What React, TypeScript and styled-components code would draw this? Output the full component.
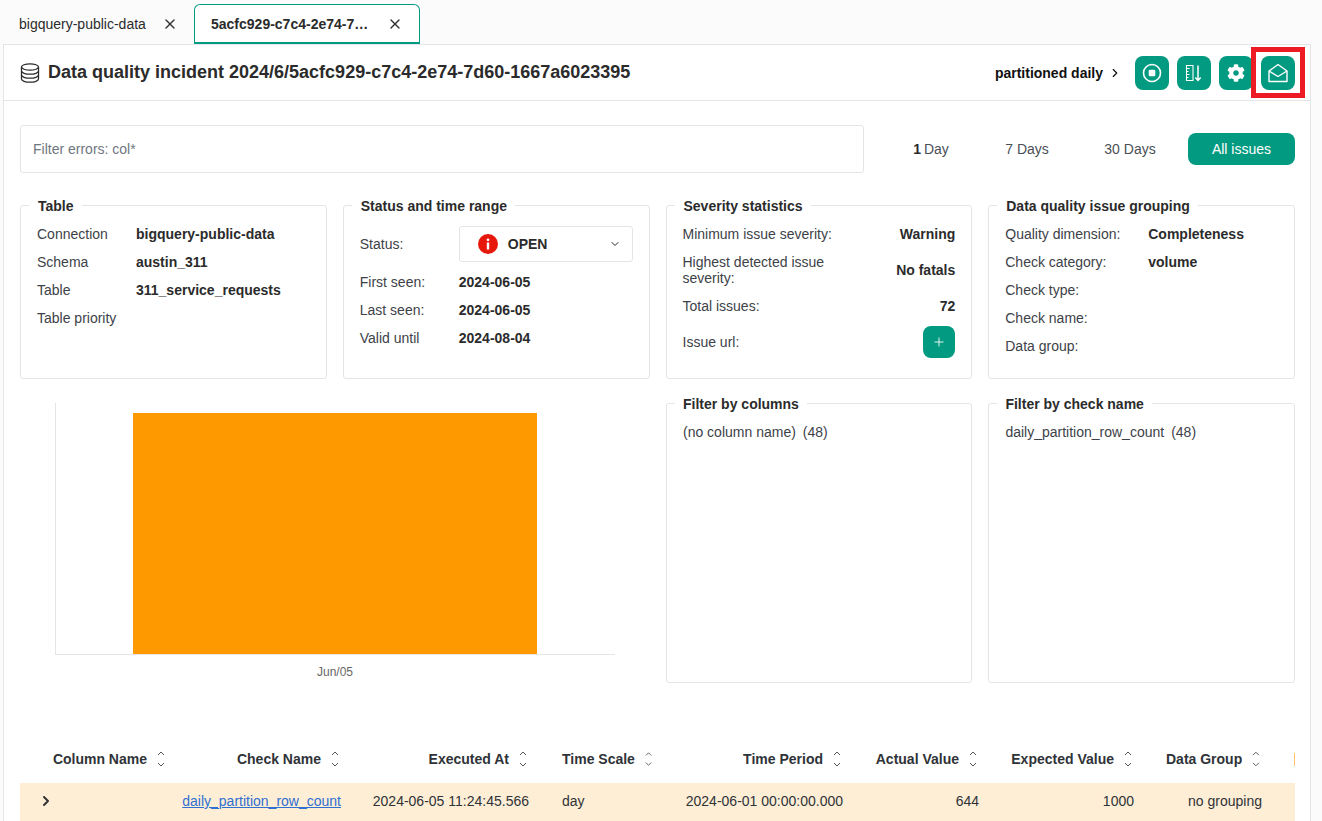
import React from 'react';
import styled, { createGlobalStyle } from 'styled-components';
import { X, ChevronRight, ChevronDown, Plus } from 'lucide-react';
import { FaCog } from 'react-icons/fa';

const GlobalStyle = createGlobalStyle`
	html, body {
		margin: 0;
		padding: 0;
		height: 821px;
		overflow: hidden;
		background: #fbfbfb;
		font-family: 'Liberation Sans', Arial, sans-serif;
		font-size: 14px;
		color: #2b2b2b;
	}
	* {
		box-sizing: border-box;
	}
`;

const Page = styled.div`
	position: relative;
	width: 1322px;
	height: 821px;
	overflow: hidden;
	padding-left: 3px;
`;

const TabBar = styled.div`
	display: flex;
	align-items: flex-end;
	height: 44px;
	padding-left: 1px;
`;

const Tab = styled.div<{ $active?: boolean }>`
	display: flex;
	align-items: center;
	justify-content: space-between;
	height: 40px;
	width: ${(props) => (props.$active ? '226px' : '190px')};
	padding: ${(props) => (props.$active ? '0 16px 0 16px' : '0 16px 0 15px')};
	font-size: 14px;
	font-weight: ${(props) => (props.$active ? 700 : 400)};
	background: ${(props) => (props.$active ? '#fff' : 'transparent')};
	border: ${(props) => (props.$active ? '1px solid #029a80' : 'none')};
	border-bottom-width: ${(props) => (props.$active ? '2px' : '0')};
	border-radius: 6px 6px 0 0;

	svg {
		flex: none;
	}
`;

const Panel = styled.div`
	width: 1308px;
	height: 777px;
	background: #fff;
	border: 1px solid #e3e5e8;
	border-bottom: none;
`;

const Header = styled.div`
	display: flex;
	align-items: center;
	justify-content: space-between;
	height: 56px;
	padding: 0 15px 0 16px;
	border-bottom: 1px solid #e3e5e8;
`;

const Title = styled.h1`
	display: flex;
	align-items: center;
	gap: 8px;
	margin: 0;
	font-size: 18px;
	font-weight: 700;
`;

const HeaderRight = styled.div`
	display: flex;
	align-items: center;
	gap: 8px;
`;

const Partition = styled.div`
	display: flex;
	align-items: center;
	gap: 5px;
	margin-right: 5px;
	font-size: 14px;
	font-weight: 700;
	color: #111;
`;

const IconButton = styled.button`
	display: flex;
	align-items: center;
	justify-content: center;
	width: 34px;
	height: 34px;
	padding: 0;
	border: none;
	border-radius: 8px;
	background: #029a80;
	color: #fff;
`;

const Body = styled.div`
	padding: 24px 15px 0 16px;
`;

const FilterRow = styled.div`
	display: flex;
	align-items: center;
	justify-content: space-between;
	height: 48px;
`;

const FilterInput = styled.div`
	display: flex;
	align-items: center;
	width: 844px;
	height: 48px;
	padding-left: 12px;
	border: 1px solid #e3e5e8;
	border-radius: 3px;
	font-size: 14px;
	color: #6f7780;
`;

const RangeGroup = styled.div`
	display: flex;
	align-items: center;
`;

const RangeButton = styled.div<{ $active?: boolean; $w: number }>`
	display: flex;
	align-items: center;
	justify-content: center;
	height: 32px;
	width: ${(props) => props.$w}px;
	border-radius: 8px;
	font-size: 14px;
	color: ${(props) => (props.$active ? '#fff' : '#4a4f55')};
	background: ${(props) => (props.$active ? '#029a80' : 'transparent')};

	b {
		font-weight: 700;
		color: #2b2b2b;
		margin-right: 3px;
	}
`;

const CardGrid = styled.div`
	display: grid;
	grid-template-columns: repeat(4, 1fr);
	column-gap: 16px;
	margin-top: 24px;
`;

const Card = styled.fieldset`
	min-width: 0;
	height: 182px;
	margin: 0;
	padding: 0 16px;
	border: 1px solid #e3e5e8;
	border-radius: 3px;
`;

const Legend = styled.legend`
	margin-left: -8px;
	padding: 1px 8px 0 9px;
	font-size: 14px;
	font-weight: 700;
	line-height: 16px;
`;

const FilterLegend = styled(Legend)`
	padding-left: 8px;
`;

const Rows = styled.div`
	display: flex;
	flex-direction: column;
	margin-top: 6px;
`;

const Row = styled.div<{ $h?: number; $between?: boolean }>`
	display: flex;
	align-items: center;
	justify-content: ${(props) => (props.$between ? 'space-between' : 'flex-start')};
	min-height: ${(props) => props.$h ?? 28}px;
	font-size: 14px;
	line-height: 16px;
`;

const RowLabel = styled.div<{ $w?: number }>`
	flex: none;
	width: ${(props) => props.$w ?? 99}px;
	color: #3d4248;
`;

const RowValue = styled.div`
	font-weight: 700;
	color: #2b2b2b;
`;

const StatusSelect = styled.div`
	display: flex;
	align-items: center;
	width: 174px;
	height: 36px;
	padding: 0 11px 0 18px;
	border: 1px solid #e3e5e8;
	border-radius: 3px;
	font-weight: 700;

	span {
		flex: 1;
		margin-left: 10px;
	}
`;

const PlusButton = styled.button`
	display: flex;
	align-items: center;
	justify-content: center;
	width: 32px;
	height: 32px;
	padding: 0;
	border: none;
	border-radius: 8px;
	background: #029a80;
	color: #fff;
`;

const MiddleGrid = styled.div`
	display: grid;
	grid-template-columns: 630px 306.4px 1fr;
	column-gap: 16px;
	margin-top: 16px;
`;

const ChartBox = styled.div`
	display: flex;
	flex-direction: column;
	height: 280px;
	margin-top: 8px;
	padding-left: 35px;
`;

const Plot = styled.div`
	display: flex;
	align-items: flex-end;
	width: 560px;
	height: 252px;
	padding-left: 77px;
	border-left: 1px solid #e3e5e8;
	border-bottom: 1px solid #e3e5e8;
`;

const Bar = styled.div`
	width: 404px;
	height: 241px;
	background: #ff9900;
`;

const AxisLabel = styled.div`
	width: 560px;
	margin-top: 10px;
	text-align: center;
	font-size: 12px;
	color: #666;
`;

const FilterCard = styled(Card)`
	height: 288px;
`;

const FilterItem = styled.div`
	display: flex;
	gap: 7px;
	margin-top: 12px;
	font-size: 14px;
	line-height: 16px;
	color: #3d4248;
`;

const Table = styled.div`
	margin-top: 60px;
	overflow: hidden;
	width: 1275px;
`;

const TableRow = styled.div<{ $head?: boolean }>`
	display: grid;
	grid-template-columns: 163px 174px 188px 125px 189px 136px 155px 128px 200px;
	align-items: center;
	height: 40px;
	padding-bottom: ${(props) => (props.$head ? '8px' : '4px')};
	background: ${(props) => (props.$head ? 'transparent' : '#feeed6')};
	font-weight: ${(props) => (props.$head ? 700 : 400)};
`;

const Cell = styled.div<{ $align?: string; $pl?: number }>`
	display: flex;
	align-items: center;
	justify-content: ${(props) => props.$align ?? 'flex-end'};
	padding: 0 16px 0 ${(props) => props.$pl ?? 16}px;
	white-space: nowrap;
	color: #2f3338;
	font-size: 14px;
`;

const HeadCell = styled(Cell)`
	padding-right: 18px;
`;

const HeadLabel = styled.span`
	margin-right: 10px;
`;

const CheckLink = styled.a`
	color: #2f6fd0;
	text-decoration: underline;
`;

const Marker = styled.span`
	width: 1px;
	height: 13px;
	background: #ffc266;
`;

const Annotation = styled.div`
	position: absolute;
	left: 1251px;
	top: 47px;
	width: 54px;
	height: 51px;
	border: 5px solid #ed1c24;
`;

const DatabaseIcon = () => (
	<svg width="20" height="20" viewBox="0 0 20 20" fill="none" stroke="#2b2b2b" strokeWidth="1.3">
		<ellipse cx="10" cy="4" rx="8.5" ry="3.2" />
		<path d="M1.500 4v12c0 1.800 3.800 3.200 8.500 3.200s8.500-1.400 8.500-3.200V4" />
		<path d="M1.500 8c0 1.800 3.800 3.200 8.500 3.200s8.500-1.400 8.500-3.200" />
		<path d="M1.500 12c0 1.800 3.800 3.200 8.500 3.200s8.500-1.400 8.500-3.200" />
	</svg>
);

const StopIcon = () => (
	<svg width="20" height="20" viewBox="0 0 20 20" fill="none">
		<circle cx="10" cy="10" r="8.500" stroke="#fff" strokeWidth="1.600" />
		<rect x="6.700" y="6.700" width="6.600" height="6.600" rx="1.200" fill="#fff" />
	</svg>
);

const SortColumnIcon = () => (
	<svg width="18" height="18" viewBox="0 0 18 18" fill="none" stroke="#fff" strokeWidth="1.100">
		<path d="M1.500 1.500h6.500v15H1.500z" />
		<path d="M1.500 4.500h3M1.500 7.500h2M1.500 10.500h3M1.500 13.500h2" />
		<path d="M13 1.500v14.500M10.300 13.500l2.700 3 2.700-3" strokeWidth="1.500" />
	</svg>
);

const OpenMailIcon = () => (
	<svg width="20" height="20" viewBox="0 0 20 20" fill="none" stroke="#fff" strokeWidth="1.400" strokeLinejoin="round">
		<path d="M1 8l9-6.500L19 8v10.500H1z" />
		<path d="M1 8l9 5.500L19 8" />
	</svg>
);

const AlertIcon = () => (
	<svg width="20" height="20" viewBox="0 0 20 20">
		<circle cx="10" cy="10" r="10" fill="#e8170b" />
		<rect x="8.800" y="8.500" width="2.400" height="7" fill="#fff" />
		<circle cx="10" cy="5.800" r="1.400" fill="#fff" />
	</svg>
);

const SortIcon = () => (
	<svg width="8" height="16" viewBox="0 0 8 16" fill="none" stroke="#555" strokeWidth="1">
		<path d="M1 4l3-3 3 3" />
		<path d="M1 12l3 3 3-3" />
	</svg>
);

const tableHead: [string, string][] = [
	['Column Name', 'flex-end'],
	['Check Name', 'flex-end'],
	['Executed At', 'flex-end'],
	['Time Scale', 'flex-start'],
	['Time Period', 'flex-end'],
	['Actual Value', 'flex-end'],
	['Expected Value', 'flex-end'],
	['Data Group', 'flex-end'],
];

const App = () => {
	return (
		<Page>
			<GlobalStyle />
			<TabBar>
				<Tab>
					bigquery-public-data
					<X size={16} color="#333" />
				</Tab>
				<Tab $active>
					5acfc929-c7c4-2e74-7…
					<X size={16} color="#333" />
				</Tab>
			</TabBar>
			<Panel>
				<Header>
					<Title>
						<DatabaseIcon />
						Data quality incident 2024/6/5acfc929-c7c4-2e74-7d60-1667a6023395
					</Title>
					<HeaderRight>
						<Partition>
							partitioned daily
							<ChevronRight size={14} />
						</Partition>
						<IconButton><StopIcon /></IconButton>
						<IconButton><SortColumnIcon /></IconButton>
						<IconButton><FaCog size={18} /></IconButton>
						<IconButton><OpenMailIcon /></IconButton>
					</HeaderRight>
				</Header>
				<Body>
					<FilterRow>
						<FilterInput>Filter errors: col*</FilterInput>
						<RangeGroup>
							<RangeButton $w={102}><b>1</b>Day</RangeButton>
							<RangeButton $w={90}>7 Days</RangeButton>
							<RangeButton $w={116}>30 Days</RangeButton>
							<RangeButton $w={107} $active>All issues</RangeButton>
						</RangeGroup>
					</FilterRow>
					<CardGrid>
						<Card>
							<Legend>Table</Legend>
							<Rows>
								<Row><RowLabel>Connection</RowLabel><RowValue>bigquery-public-data</RowValue></Row>
								<Row><RowLabel>Schema</RowLabel><RowValue>austin_311</RowValue></Row>
								<Row><RowLabel>Table</RowLabel><RowValue>311_service_requests</RowValue></Row>
								<Row><RowLabel>Table priority</RowLabel></Row>
							</Rows>
						</Card>
						<Card>
							<Legend>Status and time range</Legend>
							<Rows>
								<Row $h={48}>
									<RowLabel>Status:</RowLabel>
									<StatusSelect>
										<AlertIcon />
										<span>OPEN</span>
										<ChevronDown size={12} />
									</StatusSelect>
								</Row>
								<Row><RowLabel>First seen:</RowLabel><RowValue>2024-06-05</RowValue></Row>
								<Row><RowLabel>Last seen:</RowLabel><RowValue>2024-06-05</RowValue></Row>
								<Row><RowLabel>Valid until</RowLabel><RowValue>2024-08-04</RowValue></Row>
							</Rows>
						</Card>
						<Card>
							<Legend>Severity statistics</Legend>
							<Rows>
								<Row $between><RowLabel $w={170}>Minimum issue severity:</RowLabel><RowValue>Warning</RowValue></Row>
								<Row $between $h={44}><RowLabel $w={170}>Highest detected issue severity:</RowLabel><RowValue>No fatals</RowValue></Row>
								<Row $between><RowLabel $w={170}>Total issues:</RowLabel><RowValue>72</RowValue></Row>
								<Row $between $h={44}><RowLabel $w={170}>Issue url:</RowLabel><PlusButton><Plus size={14} strokeWidth={1.5} /></PlusButton></Row>
							</Rows>
						</Card>
						<Card>
							<Legend>Data quality issue grouping</Legend>
							<Rows>
								<Row><RowLabel $w={143}>Quality dimension:</RowLabel><RowValue>Completeness</RowValue></Row>
								<Row><RowLabel $w={143}>Check category:</RowLabel><RowValue>volume</RowValue></Row>
								<Row><RowLabel $w={143}>Check type:</RowLabel></Row>
								<Row><RowLabel $w={143}>Check name:</RowLabel></Row>
								<Row><RowLabel $w={143}>Data group:</RowLabel></Row>
							</Rows>
						</Card>
					</CardGrid>
					<MiddleGrid>
						<ChartBox>
							<Plot><Bar /></Plot>
							<AxisLabel>Jun/05</AxisLabel>
						</ChartBox>
						<FilterCard>
							<FilterLegend>Filter by columns</FilterLegend>
							<FilterItem><span>(no column name)</span><span>(48)</span></FilterItem>
						</FilterCard>
						<FilterCard>
							<FilterLegend>Filter by check name</FilterLegend>
							<FilterItem><span>daily_partition_row_count</span><span>(48)</span></FilterItem>
						</FilterCard>
					</MiddleGrid>
					<Table>
						<TableRow $head>
							{tableHead.map(([label, align]) => (
								<HeadCell key={label} $align={align} $pl={label === 'Time Scale' ? 17 : 16}>
									<HeadLabel>{label}</HeadLabel>
									<SortIcon />
								</HeadCell>
							))}
							<Cell $align="flex-start"><Marker /></Cell>
						</TableRow>
						<TableRow>
							<Cell $align="flex-start" $pl={18}><ChevronRight size={16} strokeWidth={3} color="#333" /></Cell>
							<Cell><CheckLink>daily_partition_row_count</CheckLink></Cell>
							<Cell>2024-06-05 11:24:45.566</Cell>
							<Cell $align="flex-start" $pl={17}>day</Cell>
							<Cell>2024-06-01 00:00:00.000</Cell>
							<Cell>644</Cell>
							<Cell>1000</Cell>
							<Cell>no grouping</Cell>
							<Cell />
						</TableRow>
					</Table>
				</Body>
			</Panel>
			<Annotation />
		</Page>
	);
};

export default App;
